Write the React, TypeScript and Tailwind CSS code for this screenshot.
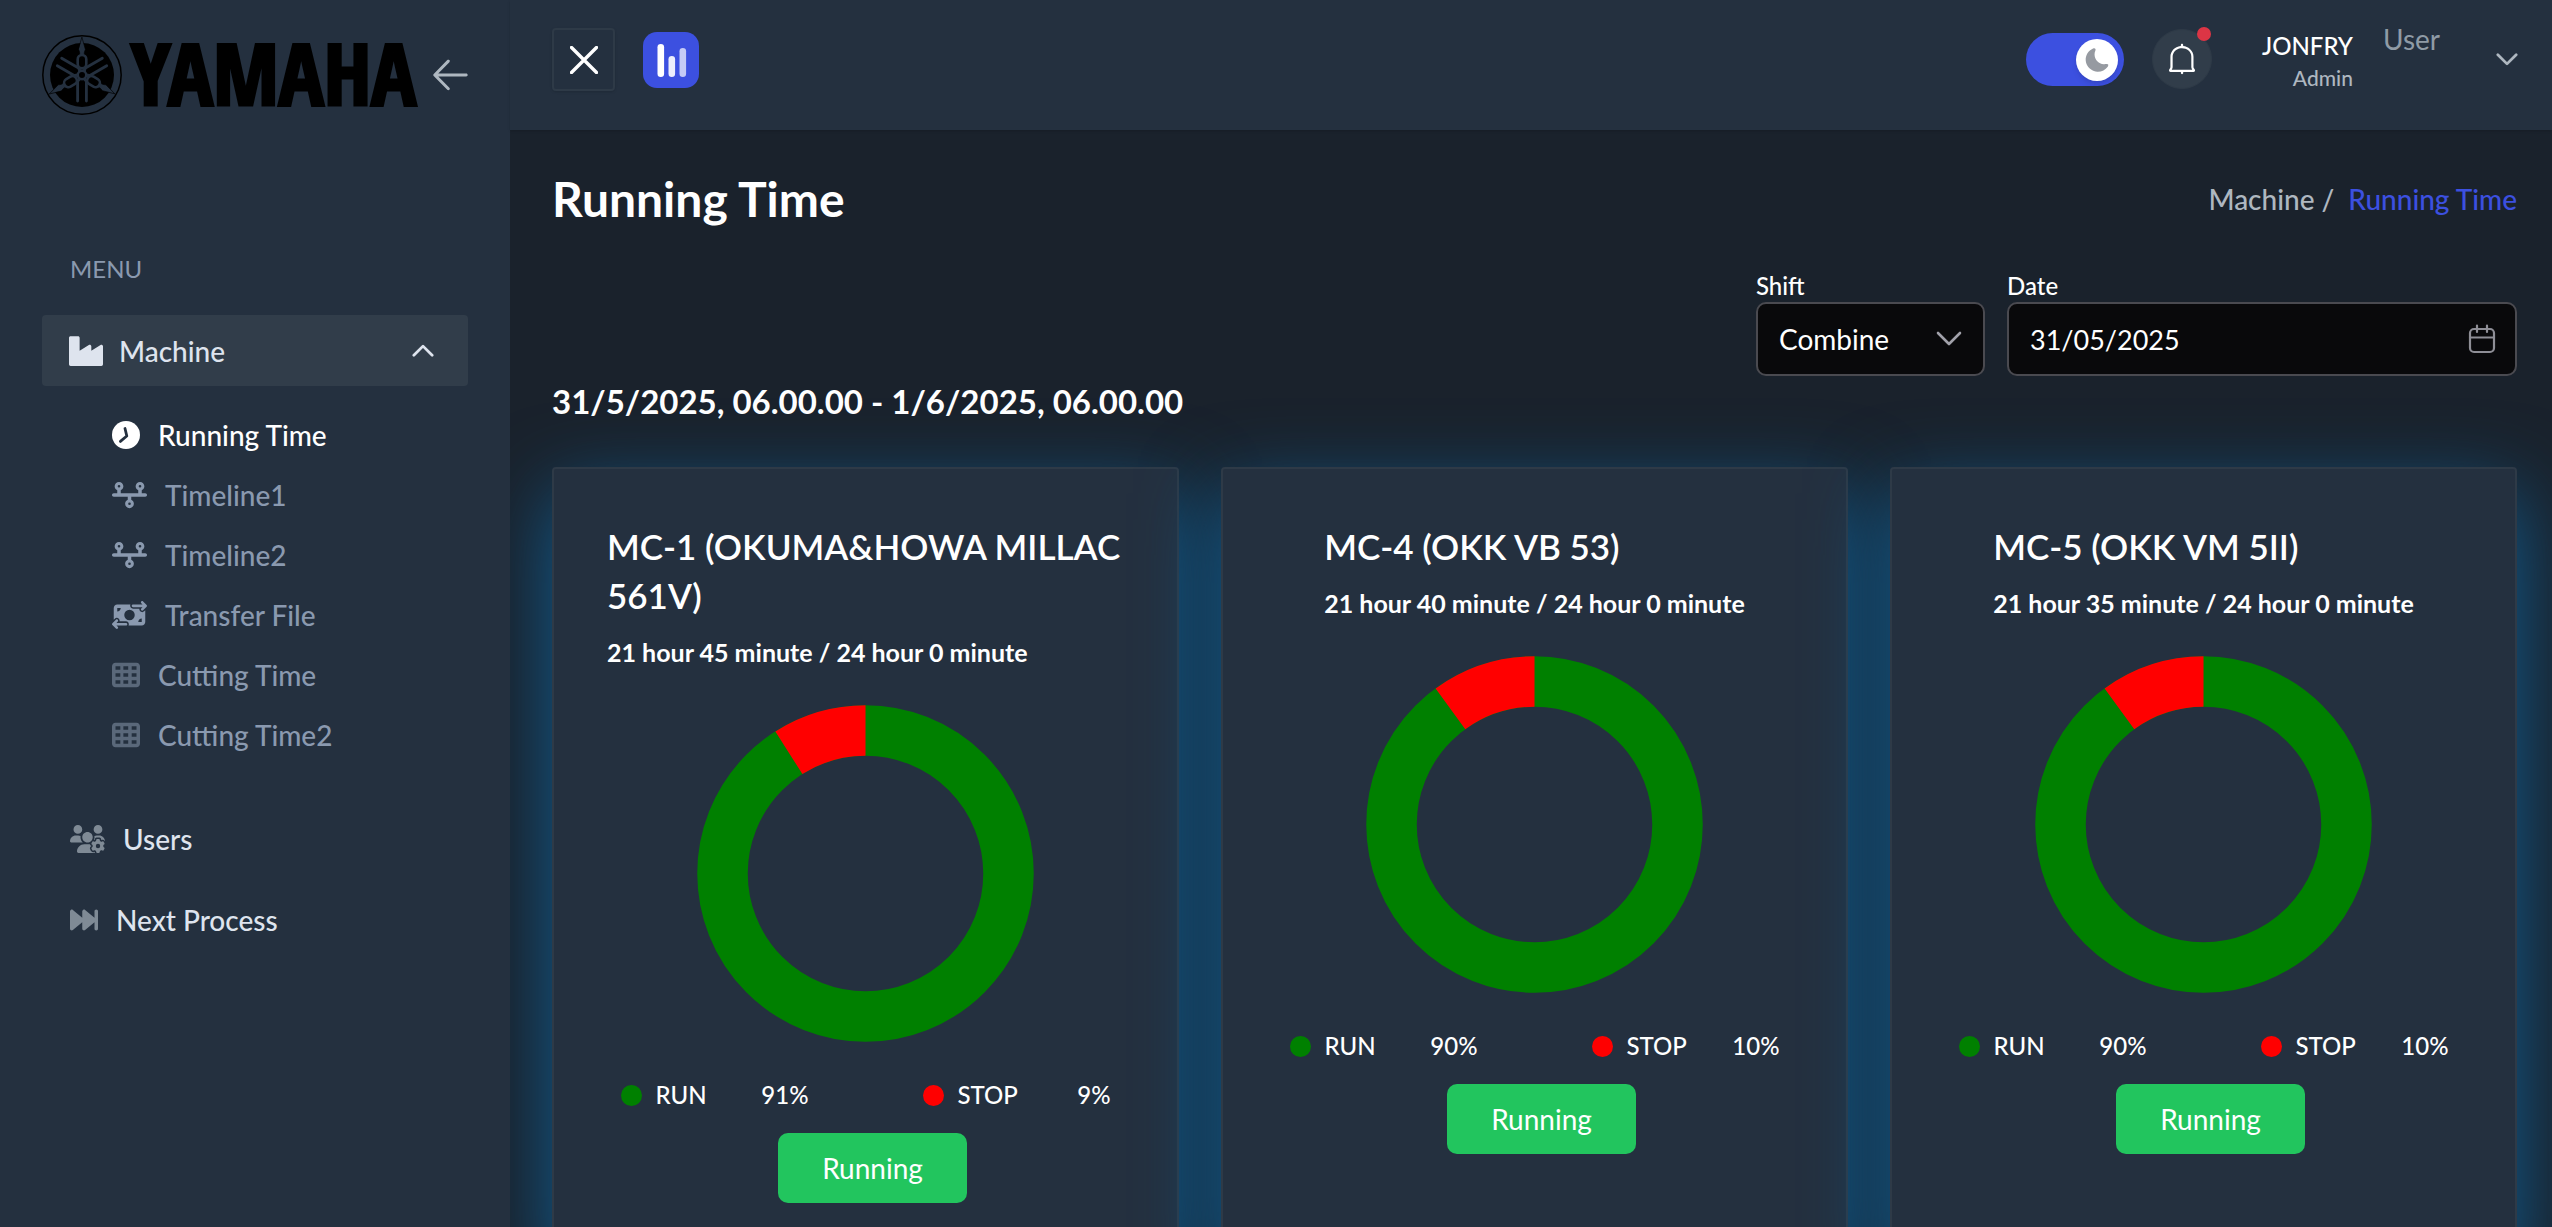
import React from 'react';
import { FaIndustry } from 'react-icons/fa';
import {
  FaForwardFast,
  FaMoneyBillTransfer,
  FaTableCells,
  FaTimeline,
  FaUsersGear,
} from 'react-icons/fa6';

type Machine = {
  name: string;
  time: string;
  run: number;
  stop: number;
};

const machines: Machine[] = [
  { name: 'MC-1 (OKUMA&HOWA MILLAC 561V)', time: '21 hour 45 minute / 24 hour 0 minute', run: 91, stop: 9 },
  { name: 'MC-4 (OKK VB 53)', time: '21 hour 40 minute / 24 hour 0 minute', run: 90, stop: 10 },
  { name: 'MC-5 (OKK VM 5II)', time: '21 hour 35 minute / 24 hour 0 minute', run: 90, stop: 10 },
];

function ClockIcon() {
  return (
    <svg className="size-7" viewBox="0 0 28 28" fill="none" aria-hidden="true">
      <circle cx="14" cy="14" r="14" fill="#fff" />
      <path d="M13 7.5L14.8 15L8.4 20.4" stroke="#24303F" strokeWidth="2.8" strokeLinecap="round" strokeLinejoin="round" />
    </svg>
  );
}

const subItems = [
  { label: 'Running Time', icon: <ClockIcon />, active: true },
  { label: 'Timeline1', icon: <FaTimeline className="h-7 w-[35px]" /> },
  { label: 'Timeline2', icon: <FaTimeline className="h-7 w-[35px]" /> },
  { label: 'Transfer File', icon: <FaMoneyBillTransfer className="h-7 w-[35px]" /> },
  { label: 'Cutting Time', icon: <FaTableCells className="size-7 text-[#5A687A]" /> },
  { label: 'Cutting Time2', icon: <FaTableCells className="size-7 text-[#5A687A]" /> },
];

function Emblem() {
  return (
    <svg className="size-20 shrink-0" viewBox="0 0 80 80" fill="none" aria-hidden="true">
      <circle cx="40" cy="40" r="39.2" stroke="#000" strokeWidth="1.5" />
      <circle cx="40" cy="40" r="32" fill="#000" />
      {[0, 120, 240].map((angle) => (
        <g key={angle} transform={`rotate(${angle} 40 40)`} stroke="#24303F" strokeLinecap="round">
          <path
            d="M40 2.5L43.4 14.5C42.2 17 42 18.5 42.6 20.5H37.4C38 18.5 37.8 17 36.6 14.5Z"
            fill="#24303F"
            stroke="#000"
            strokeWidth="0.6"
          />
          <rect x="35.7" y="20" width="8.6" height="13.4" rx="4.3" strokeWidth="2.6" />
          <path d="M35.6 46V66M44.4 46V66" strokeWidth="2.8" />
          <path d="M36.4 33L37.6 37M43.6 33L42.4 37M35.6 47L37 43M44.4 47L43 43" strokeWidth="2.2" />
        </g>
      ))}
      <circle cx="40" cy="40" r="4.2" fill="#000" stroke="#24303F" strokeWidth="2.4" />
    </svg>
  );
}

function Chevron({ className }: { className: string }) {
  return (
    <svg className={className} viewBox="0 0 12 8" fill="none" aria-hidden="true">
      <path d="M1 1.4L6 6.4L11 1.4" stroke="currentColor" strokeWidth="1.5" strokeLinecap="round" strokeLinejoin="round" />
    </svg>
  );
}

function Sidebar() {
  return (
    <aside className="relative z-10 flex w-[510px] shrink-0 flex-col bg-[#24303F] px-[42px] pt-[35px]">
      <div className="flex h-20 items-center justify-between">
        <a href="#home" className="flex items-start gap-[9px] text-black">
          <Emblem />
          <span className="font-['Open_Sans_Condensed','Open_Sans',sans-serif] text-[84px] leading-[76px] font-bold [-webkit-text-stroke:3px_#000]">
            YAMAHA
          </span>
        </a>
        <button type="button" aria-label="Collapse sidebar" className="text-[#AEB7C0]">
          <svg className="h-8 w-[35px]" viewBox="0 0 20 18" fill="currentColor" aria-hidden="true">
            <path d="M19 8.175H2.98748L9.36248 1.6875C9.69998 1.35 9.69998 0.825 9.36248 0.4875C9.02498 0.15 8.49998 0.15 8.16248 0.4875L0.399976 8.3625C0.0624756 8.7 0.0624756 9.225 0.399976 9.5625L8.16248 17.4375C8.31248 17.5875 8.53748 17.7 8.76248 17.7C8.98748 17.7 9.17498 17.625 9.36248 17.475C9.69998 17.1375 9.69998 16.6125 9.36248 16.275L3.02498 9.8625H19C19.45 9.8625 19.825 9.4875 19.825 9.0375C19.825 8.55 19.45 8.175 19 8.175Z" />
          </svg>
        </button>
      </div>

      <nav className="mt-[136px]">
        <h3 className="px-7 text-[24px] leading-9 text-[#8A99AF]">MENU</h3>
        <button
          type="button"
          aria-expanded="true"
          className="mt-7 flex h-[71px] w-full items-center rounded-sm bg-[#313D4A] pr-[34px] pl-[27px] text-[28px] leading-[42px] font-medium text-[#DEE4EE]"
        >
          <FaIndustry className="size-[34px]" />
          <span className="ml-4">Machine</span>
          <Chevron className="ml-auto h-[15px] w-[22px] rotate-180" />
        </button>
        <ul className="mt-7 flex flex-col gap-[18px] pl-[70px]">
          {subItems.map((item) => (
            <li key={item.label}>
              <a
                href="#machine"
                className={
                  item.active
                    ? 'flex items-center gap-[18px] text-[28px] leading-[42px] font-medium text-white'
                    : 'flex items-center gap-[18px] text-[28px] leading-[42px] font-medium text-[#8A99AF]'
                }
              >
                {item.icon}
                {item.label}
              </a>
            </li>
          ))}
        </ul>
        <ul className="mt-12 flex flex-col gap-[11px]">
          <li>
            <a href="#users" className="flex h-[70px] items-center gap-[18px] px-7 text-[28px] font-medium text-[#DEE4EE]">
              <FaUsersGear className="h-7 w-[35px] text-[#7F8A95]" />
              Users
            </a>
          </li>
          <li>
            <a href="#next" className="flex h-[70px] items-center gap-[18px] px-7 text-[28px] font-medium text-[#DEE4EE]">
              <FaForwardFast className="size-7 text-[#7F8A95]" />
              Next Process
            </a>
          </li>
        </ul>
      </nav>
    </aside>
  );
}

function Header() {
  return (
    <header className="relative z-10 flex h-[130px] shrink-0 items-start justify-between bg-[#24303F] pt-7 pr-[34px] pl-[42px] shadow-sm">
      <div className="flex items-center gap-7">
        <button
          type="button"
          aria-label="Close menu"
          className="flex size-[63px] items-center justify-center rounded-sm border-2 border-[#2E3A47] text-white shadow-sm"
        >
          <svg className="size-7" viewBox="0 0 28 28" fill="none" aria-hidden="true">
            <path d="M1.5 1.5L26.5 26.5M26.5 1.5L1.5 26.5" stroke="currentColor" strokeWidth="3.4" strokeLinecap="round" />
          </svg>
        </button>
        <a href="#home" aria-label="Dashboard">
          <svg className="size-14" viewBox="0 0 56 56" fill="none" aria-hidden="true">
            <rect width="56" height="56" rx="14" fill="#3C50E0" />
            <rect x="14.5" y="12" width="6.6" height="33" rx="3.3" fill="#fff" />
            <rect x="25.5" y="24" width="6.6" height="21" rx="3.3" fill="#fff" fillOpacity="0.9" />
            <rect x="36.5" y="16" width="6.6" height="29" rx="3.3" fill="#fff" fillOpacity="0.7" />
          </svg>
        </a>
      </div>

      <div className="flex items-start">
        <label className="mt-[5px] flex h-[53px] w-[98px] cursor-pointer items-center justify-end rounded-full bg-[#3C50E0] pr-[6px]">
          <input type="checkbox" defaultChecked className="sr-only" aria-label="Dark mode" />
          <span className="flex size-[42px] items-center justify-center rounded-full bg-white shadow-md">
            <svg className="size-7" viewBox="0 0 16 16" aria-hidden="true">
              <path
                d="M14.3533 10.62C14.2466 10.44 13.9466 10.16 13.1999 10.2933C12.7866 10.3667 12.3666 10.4 11.9466 10.38C10.3933 10.3133 8.98659 9.6 8.00659 8.5C7.13993 7.53333 6.60659 6.27333 6.59993 4.91333C6.59993 4.15333 6.74659 3.42 7.04659 2.72666C7.33993 2.05333 7.13326 1.7 6.98659 1.55333C6.83326 1.4 6.47326 1.18666 5.76659 1.48C3.03993 2.62666 1.35326 5.36 1.55326 8.28666C1.75326 11.04 3.68659 13.3933 6.24659 14.28C6.85993 14.4933 7.50659 14.62 8.17326 14.6467C8.27993 14.6533 8.38659 14.66 8.49326 14.66C10.7266 14.66 12.8199 13.6067 14.1399 11.8133C14.5866 11.1933 14.4666 10.8 14.3533 10.62Z"
                fill="#969AA1"
              />
            </svg>
          </span>
        </label>

        <button
          type="button"
          aria-label="Notifications"
          className="relative mt-px ml-7 flex size-[60px] items-center justify-center rounded-full border border-[#2E3A47] bg-[#313D4A] text-white"
        >
          <span className="absolute -top-[3px] right-0 size-[14px] rounded-full bg-[#DC3545]" />
          <svg className="size-8" viewBox="0 0 18 18" fill="currentColor" aria-hidden="true">
            <path d="M16.1999 14.9343L15.6374 14.0624C15.5249 13.8937 15.4687 13.7249 15.4687 13.528V7.67803C15.4687 6.01865 14.7655 4.47178 13.4718 3.31865C12.4312 2.39053 11.0812 1.7999 9.64678 1.6874V1.1249C9.64678 0.787402 9.36553 0.478027 8.9999 0.478027C8.6624 0.478027 8.35303 0.759277 8.35303 1.1249V1.65928C8.29678 1.65928 8.24053 1.65928 8.18428 1.6874C4.92178 2.05303 2.4749 4.66865 2.4749 7.79053V13.528C2.44678 13.8093 2.39053 13.9499 2.33428 14.0343L1.7999 14.9343C1.63115 15.2155 1.63115 15.553 1.7999 15.8343C1.96865 16.0874 2.2499 16.2562 2.55928 16.2562H8.38115V16.8749C8.38115 17.2124 8.6624 17.5218 9.02803 17.5218C9.36553 17.5218 9.6749 17.2405 9.6749 16.8749V16.2562H15.4687C15.778 16.2562 16.0593 16.0874 16.228 15.8343C16.3968 15.553 16.3968 15.2155 16.1999 14.9343ZM3.23428 14.9905L3.43115 14.653C3.5999 14.3718 3.68428 14.0343 3.74053 13.6405V7.79053C3.74053 5.31553 5.70928 3.23428 8.3249 2.95303C9.92803 2.78428 11.503 3.2624 12.6562 4.2749C13.6687 5.1749 14.2312 6.38428 14.2312 7.67803V13.528C14.2312 13.9499 14.3437 14.3437 14.5968 14.7374L14.7655 14.9905H3.23428Z" />
          </svg>
        </button>

        <button type="button" className="ml-[50px] flex h-[63px] items-start">
          <span className="text-right font-medium">
            <span className="block text-[24px] leading-9 text-white">JONFRY</span>
            <span className="block text-[21px] leading-7 text-[#AEB7C0]">Admin</span>
          </span>
          <span className="-mt-[10px] ml-[30px] text-[28px] leading-[42px] text-[#8F9BA6]">User</span>
          <Chevron className="mt-6 ml-14 h-[15px] w-[22px] text-[#AEB7C0]" />
        </button>
      </div>
    </header>
  );
}

function Filters() {
  return (
    <div className="mt-[45px] flex justify-end gap-[22px]">
      <div>
        <label htmlFor="shift" className="block text-[24px] leading-8 font-medium text-white">
          Shift
        </label>
        <div className="relative">
          <select
            id="shift"
            defaultValue="combine"
            className="h-[74px] w-[229px] appearance-none rounded-[10px] border-2 border-[#4A4A50] bg-[#09090B] pl-[21px] text-[28px] text-white"
          >
            <option value="combine">Combine</option>
          </select>
          <svg
            className="pointer-events-none absolute top-[29px] right-[23px] h-4 w-[26px] text-[#A1A1AA]"
            viewBox="0 0 26 16"
            fill="none"
            aria-hidden="true"
          >
            <path d="M2 2L13 13L24 2" stroke="currentColor" strokeWidth="2.6" strokeLinecap="round" strokeLinejoin="round" />
          </svg>
        </div>
      </div>
      <div>
        <label htmlFor="date" className="block text-[24px] leading-8 font-medium text-white">
          Date
        </label>
        <div className="relative">
          <input
            id="date"
            type="text"
            defaultValue="31/05/2025"
            className="h-[74px] w-[510px] rounded-[10px] border-2 border-[#4A4A50] bg-[#09090B] pr-16 pl-[21px] text-[27px] text-white"
          />
          <svg
            className="pointer-events-none absolute top-[22px] right-[21px] h-[30px] w-[28px] text-[#8E8E96]"
            viewBox="0 0 28 30"
            fill="none"
            stroke="currentColor"
            strokeWidth="2.2"
            strokeLinecap="round"
            aria-hidden="true"
          >
            <rect x="2" y="5" width="24" height="23" rx="4" />
            <path d="M2 13.5H26M9 1.5V8M19 1.5V8" />
          </svg>
        </div>
      </div>
    </div>
  );
}

function Donut({ stop }: { stop: number }) {
  const radius = 143;
  const length = 2 * Math.PI * radius;
  const arc = (length * stop) / 100;
  return (
    <svg className="size-[337px]" viewBox="0 0 337 337" fill="none" role="img" aria-label={`Stopped ${stop}%`}>
      <circle cx="168.5" cy="168.5" r={radius} stroke="#008000" strokeWidth="50.5" />
      <circle
        cx="168.5"
        cy="168.5"
        r={radius}
        stroke="#FF0000"
        strokeWidth="50.5"
        strokeDasharray={`${arc} ${length - arc}`}
        transform={`rotate(${-90 - stop * 3.6} 168.5 168.5)`}
      />
    </svg>
  );
}

function MachineCard({ machine }: { machine: Machine }) {
  return (
    <article className="flex flex-col items-center rounded-sm border-2 border-[#2E3A47] bg-[#24303F] px-[53px] pt-[53px] pb-14 shadow-[0_26px_80px_rgb(16,94,146)]">
      <div className="text-white">
        <h2 className="text-[35px] leading-[49px] font-semibold">{machine.name}</h2>
        <p className="mt-4 text-[25px] leading-8 font-bold">{machine.time}</p>
      </div>
      <div className="mt-[37px]">
        <Donut stop={machine.stop} />
      </div>
      <dl className="mt-[35px] flex w-[490px] justify-between text-[24px] leading-9 font-medium text-white">
        <div className="flex w-[188px] items-center">
          <dt className="flex items-center gap-[14px]">
            <span className="size-[21px] rounded-full bg-[#008000]" />
            RUN
          </dt>
          <dd className="ml-auto">{machine.run}%</dd>
        </div>
        <div className="flex w-[188px] items-center">
          <dt className="flex items-center gap-[14px]">
            <span className="size-[21px] rounded-full bg-[#FF0000]" />
            STOP
          </dt>
          <dd className="ml-auto">{machine.stop}%</dd>
        </div>
      </dl>
      <button type="button" className="mt-5 ml-[14px] h-[70px] w-[189px] rounded-[10px] bg-[#22C55E] text-[28px] text-white">
        Running
      </button>
    </article>
  );
}

export default function App() {
  return (
    <div className="flex h-screen overflow-hidden bg-[#1A222C] font-['Lato',sans-serif]">
      <Sidebar />
      <div className="flex min-w-0 grow flex-col">
        <Header />
        <main className="pt-[43px] pr-[35px] pl-[42px]">
          <div className="flex items-center justify-between">
            <h1 className="text-[48px] leading-[52px] font-bold text-white">Running Time</h1>
            <nav aria-label="Breadcrumb" className="flex gap-[14px] text-[28px] leading-[42px] font-medium">
              <a href="#machine" className="text-[#AEB7C0]">
                Machine /
              </a>
              <span className="text-[#3C50E0]">Running Time</span>
            </nav>
          </div>
          <Filters />
          <p className="text-[33px] leading-[50px] font-bold text-white">31/5/2025, 06.00.00 - 1/6/2025, 06.00.00</p>
          <div className="mt-[41px] grid grid-cols-3 gap-[42px]">
            {machines.map((machine) => (
              <MachineCard key={machine.name} machine={machine} />
            ))}
          </div>
        </main>
      </div>
    </div>
  );
}
